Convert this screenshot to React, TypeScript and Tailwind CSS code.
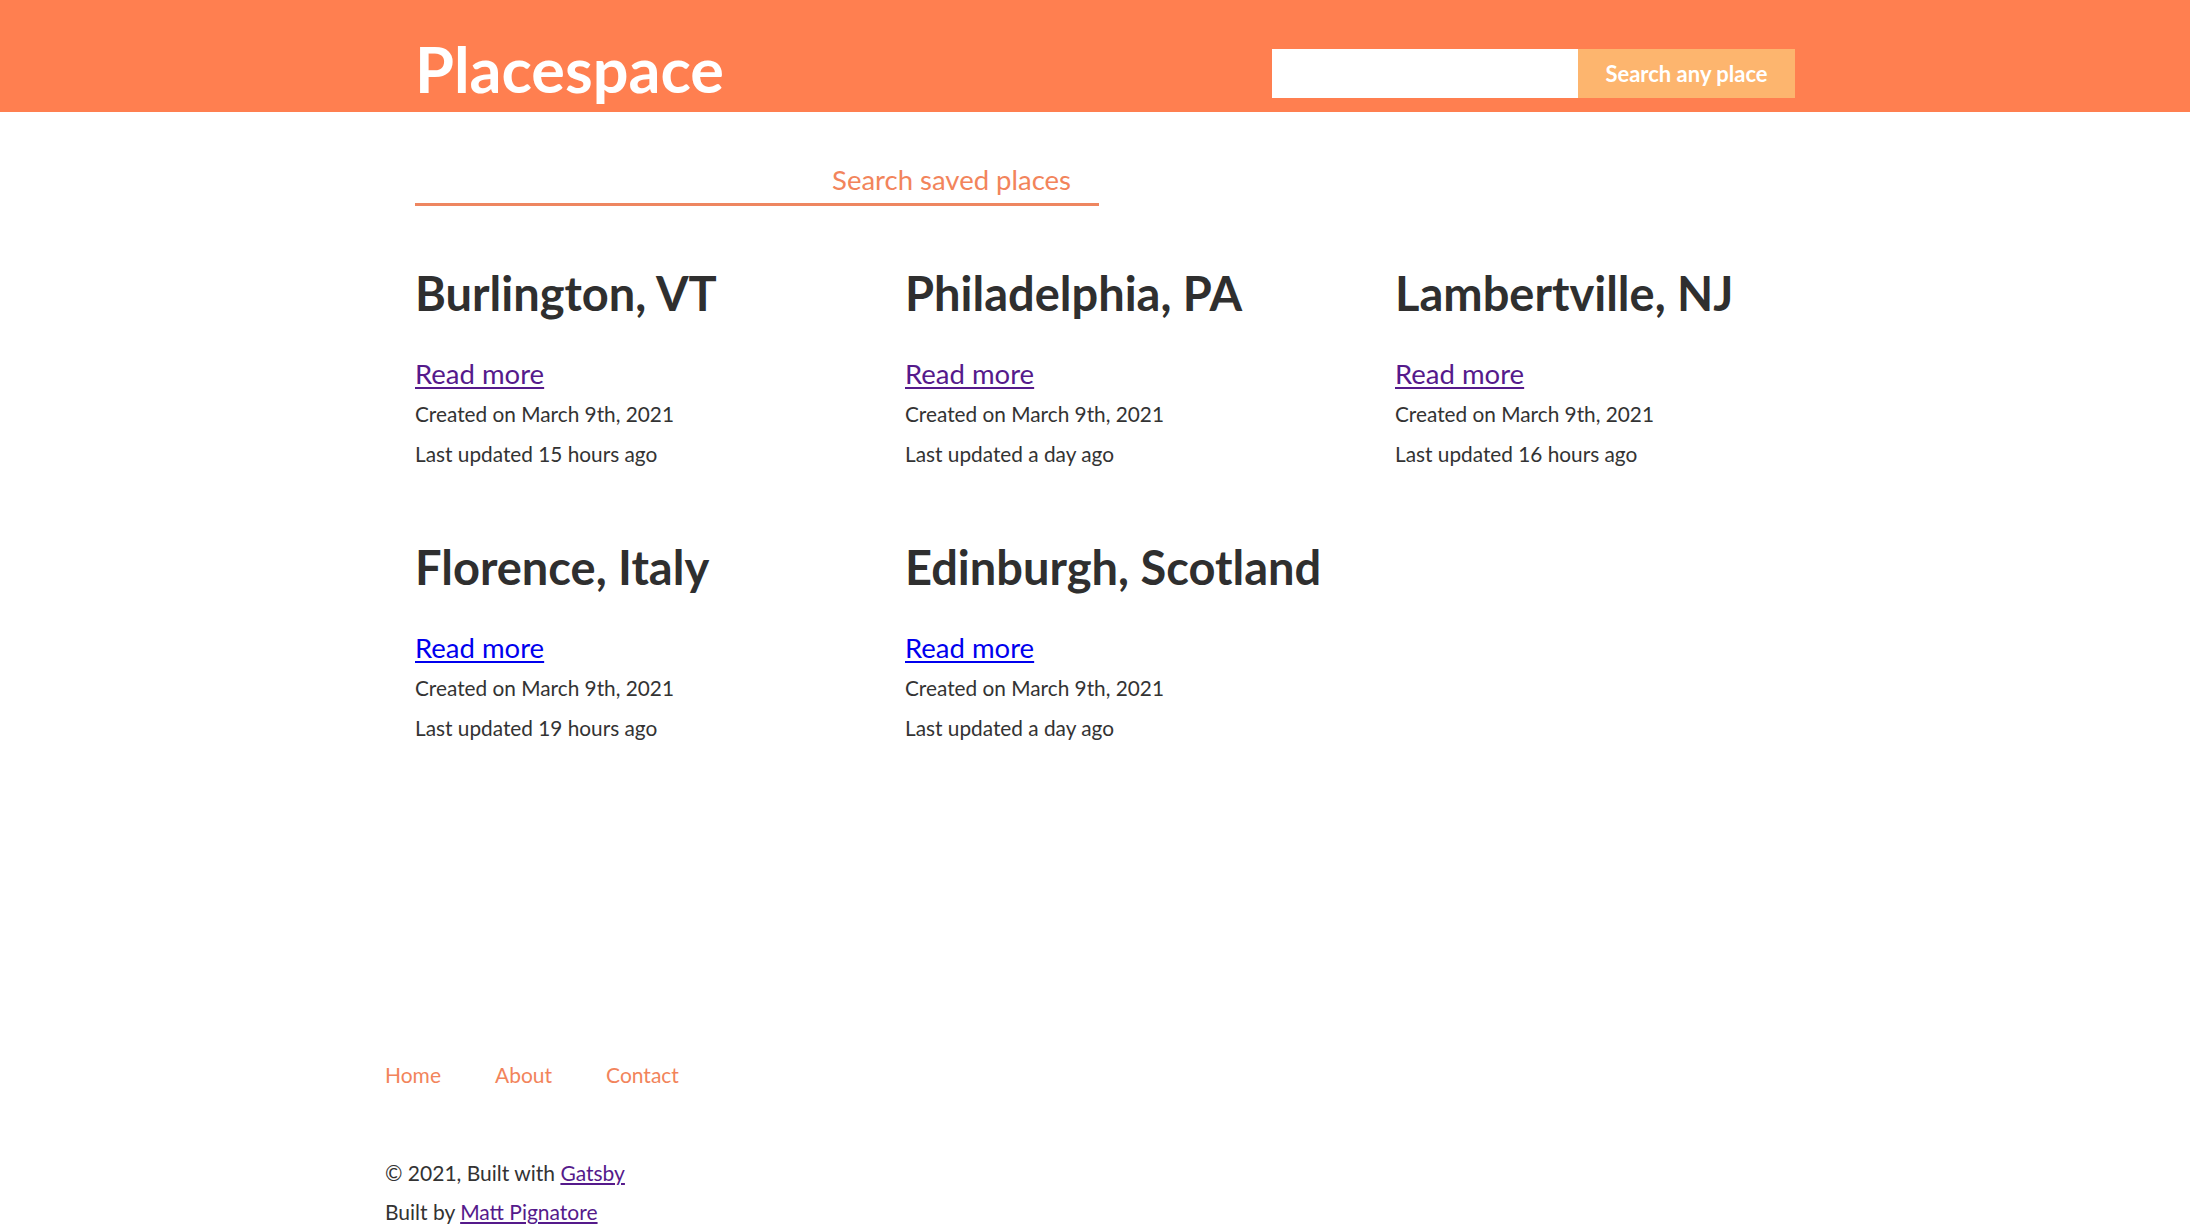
import React from "react";

const places = [
  { name: "Burlington, VT", updated: "Last updated 15 hours ago", visited: true },
  { name: "Philadelphia, PA", updated: "Last updated a day ago", visited: true },
  { name: "Lambertville, NJ", updated: "Last updated 16 hours ago", visited: true },
  { name: "Florence, Italy", updated: "Last updated 19 hours ago", visited: false },
  { name: "Edinburgh, Scotland", updated: "Last updated a day ago", visited: false },
];

export default function App() {
  return (
    <div className="min-h-[1231px] bg-white text-[#333333] font-['Lato',sans-serif]">
      <header className="h-[112px] bg-[#ff7f50]">
        <div className="mx-auto flex w-[1400px] items-start justify-between pl-[20px]">
          <h1 className="mt-[33px] text-[63px] font-bold leading-[72px] text-white">Placespace</h1>
          <div className="mt-[49px] flex h-[49px]">
            <input className="h-[49px] w-[306px] border-0 bg-white px-3 outline-none" aria-label="Search" />
            <button className="h-[49px] w-[217px] bg-[#fdb56e] text-[22px] font-bold text-white">Search any place</button>
          </div>
        </div>
      </header>

      <main className="mx-auto w-[1400px] pl-[20px]">
        <div className="mt-[43px] w-[684px]">
          <input
            placeholder="Search saved places"
            className="h-[51px] w-full border-0 border-b-[3px] border-solid border-[#ee8660] bg-transparent pr-[28px] text-right text-[27.5px] text-[#f2845b] outline-none placeholder:text-[#f2845b]"
          />
        </div>

        <div className="mt-[60px] grid grid-cols-[490px_490px_490px] gap-y-[66px]">
          {places.map((p) => (
            <div key={p.name}>
              <h2 className="text-[47px] font-bold leading-[55px] text-[#2f2f2f]">{p.name}</h2>
              <a
                href="#"
                className={`mt-[33px] block w-fit text-[27.5px] leading-[40px] underline underline-offset-[3px] ${p.visited ? "text-[#551a8b]" : "text-[#0000ee]"}`}
              >
                Read more
              </a>
              <p className="text-[20.8px] leading-[40px]">Created on March 9th, 2021</p>
              <p className="text-[20.8px] leading-[40px]">{p.updated}</p>
            </div>
          ))}
        </div>
      </main>

      <footer className="mx-auto mt-[312px] w-[1420px]">
        <nav className="flex gap-[54px] text-[21px] leading-[30px] text-[#f2845b]">
          <a href="#">Home</a>
          <a href="#">About</a>
          <a href="#">Contact</a>
        </nav>
        <div className="mt-[63px] text-[21px] leading-[39px]">
          <p>
            © 2021, Built with <a href="#" className="text-[#551a8b] underline">Gatsby</a>
          </p>
          <p>
            Built by <a href="#" className="text-[#551a8b] underline">Matt Pignatore</a>
          </p>
        </div>
      </footer>
    </div>
  );
}
